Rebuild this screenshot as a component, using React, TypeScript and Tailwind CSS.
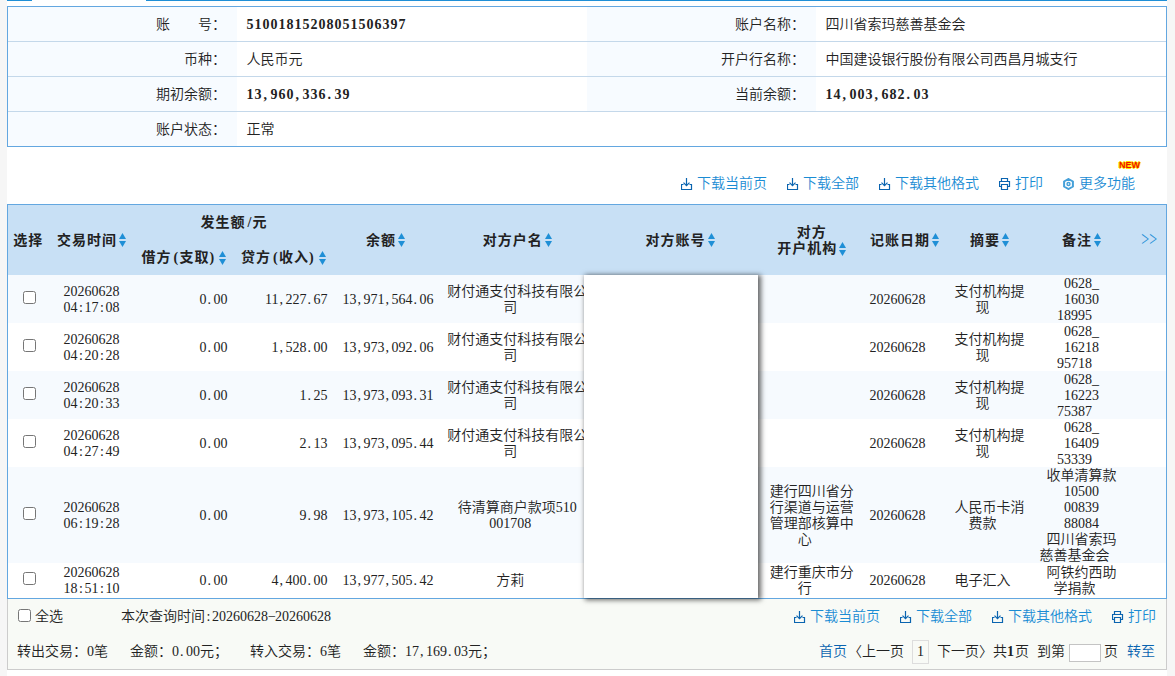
import type { ReactNode } from "react";
import clsx from "clsx";

type Transaction = {
  id: number;
  time: string[];
  debit: string;
  credit: string;
  balance: string;
  name: string[];
  branch: string[];
  date: string;
  summary: string[];
  remark: string[];
  height: string;
};

const transactions: Transaction[] = [
  {
    id: 1,
    time: ["20260628", "04:17:08"],
    debit: "0.00",
    credit: "11,227.67",
    balance: "13,971,564.06",
    name: ["财付通支付科技有限公", "司"],
    branch: [],
    date: "20260628",
    summary: ["支付机构提", "现"],
    remark: ["0628_", "16030", "18995"],
    height: "h-12 pt-0.5"
  },
  {
    id: 2,
    time: ["20260628", "04:20:28"],
    debit: "0.00",
    credit: "1,528.00",
    balance: "13,973,092.06",
    name: ["财付通支付科技有限公", "司"],
    branch: [],
    date: "20260628",
    summary: ["支付机构提", "现"],
    remark: ["0628_", "16218", "95718"],
    height: "h-12 pt-0.5"
  },
  {
    id: 3,
    time: ["20260628", "04:20:33"],
    debit: "0.00",
    credit: "1.25",
    balance: "13,973,093.31",
    name: ["财付通支付科技有限公", "司"],
    branch: [],
    date: "20260628",
    summary: ["支付机构提", "现"],
    remark: ["0628_", "16223", "75387"],
    height: "h-12 pt-0.5"
  },
  {
    id: 4,
    time: ["20260628", "04:27:49"],
    debit: "0.00",
    credit: "2.13",
    balance: "13,973,095.44",
    name: ["财付通支付科技有限公", "司"],
    branch: [],
    date: "20260628",
    summary: ["支付机构提", "现"],
    remark: ["0628_", "16409", "53339"],
    height: "h-12 pt-0.5"
  },
  {
    id: 5,
    time: ["20260628", "06:19:28"],
    debit: "0.00",
    credit: "9.98",
    balance: "13,973,105.42",
    name: ["待清算商户款项510", "001708"],
    branch: ["建行四川省分", "行渠道与运营", "管理部核算中", "心"],
    date: "20260628",
    summary: ["人民币卡消", "费款"],
    remark: ["收单清算款", "10500", "00839", "88084", "四川省索玛", "慈善基金会"],
    height: "h-24 pt-0.5"
  },
  {
    id: 6,
    time: ["20260628", "18:51:10"],
    debit: "0.00",
    credit: "4,400.00",
    balance: "13,977,505.42",
    name: ["方莉"],
    branch: ["建行重庆市分", "行"],
    date: "20260628",
    summary: ["电子汇入"],
    remark: ["阿铁约西助", "学捐款"],
    height: "h-[35px]"
  }
];

const columns =
  "grid grid-cols-[40.5px_86px_99px_100px_104px_159.5px_166px_97.5px_88px_82px_102px_33.5px] grid-rows-[minmax(0,1fr)]";

// Pads the narrow punctuation so every character takes one fixed cell
const Mono = ({ text, bold = false }: { text: string; bold?: boolean }) => (
  <span className={clsx("whitespace-pre", bold && "font-bold tracking-[1px]")}>
    {text.split(/([.,:])/).map((part, index) =>
      /^[.,:]$/.test(part) ? (
        <span
          className={clsx(part === ":" ? "pl-[1.5px]" : "pl-[1px]", bold && "tracking-[3.5px]", !bold && part === ":" && "tracking-[1.6px]", !bold && part !== ":" && "tracking-[2.5px]")}
          key={index}
        >
          {part}
        </span>
      ) : (
        part
      )
    )}
  </span>
);

const Lines = ({ lines }: { lines: string[] }) => (
  <div className="flex flex-col items-center justify-center">
    {lines.map((line, index) => (
      <span className={clsx("whitespace-nowrap", index === lines.length - 1 && "pr-[14px]")} key={index}>
        {line}
      </span>
    ))}
  </div>
);

const SortIcon = () => (
  <svg className="ml-[2px] shrink-0" width="7" height="14" viewBox="0 0 7 14" fill="#1f8fd6">
    <path d="M3.5 0 7 6H0z" />
    <path d="M0 8h7l-3.5 6z" />
  </svg>
);

const DownloadIcon = () => (
  <svg className="mr-[4px]" width="12" height="12" viewBox="0 0 12 12" fill="none" stroke="#0a64b0">
    <path d="M5.5 0v8M2.5 4.7l3 3 3-3" strokeWidth="1.2" />
    <path d="M2.5 6.5h-2v5h10v-5h-2" strokeWidth="1.2" />
  </svg>
);

const PrintIcon = () => (
  <svg className="mr-[4px]" width="12" height="12" viewBox="0 0 12 12" fill="none" stroke="#0a64b0" strokeWidth="1.2">
    <path d="M2.5 3.5v-3h6v3M2.5 8.5h-2v-5h10v5h-2" />
    <path d="M2.5 6.5h6v5h-6z" />
  </svg>
);

const GearIcon = () => (
  <svg className="mr-[4px]" width="12" height="12" viewBox="0 0 12 12" fill="none" stroke="#45a0d9">
    <path d="M5.5 1 9.9 3.5v5L5.5 11 1.1 8.5v-5z" strokeWidth="2" />
    <circle cx="5.5" cy="6" r="1.5" strokeWidth="1.4" />
  </svg>
);

const ActionLink = ({ icon, children }: { icon: ReactNode; children: ReactNode }) => (
  <a className="flex items-center text-[#1a8cd4]" href="#">
    {icon}
    {children}
  </a>
);

const DownloadLinks = () => (
  <>
    <ActionLink icon={<DownloadIcon />}>下载当前页</ActionLink>
    <ActionLink icon={<DownloadIcon />}>下载全部</ActionLink>
    <ActionLink icon={<DownloadIcon />}>下载其他格式</ActionLink>
    <ActionLink icon={<PrintIcon />}>打印</ActionLink>
  </>
);

const HeaderText = ({ text }: { text: string }) => (
  <span className="whitespace-nowrap">
    {text.split(/([()/])/).map((part, index) =>
      /^[()/]$/.test(part) ? (
        <span className={clsx("tracking-[1.3px]", part === ")" ? "pr-[2px]" : "pl-[2px]")} key={index}>
          {part}
        </span>
      ) : (
        part
      )
    )}
  </span>
);

const HeaderCell = ({ label, sub = false }: { label: string; sub?: boolean }) => (
  <div className="flex items-center justify-center">
    <span className={clsx(!sub && "pt-0.5")}>
      <HeaderText text={label} />
    </span>
    <SortIcon />
  </div>
);

const InfoLabel = ({ children }: { children: ReactNode }) => (
  <div className="flex items-center justify-end bg-[#f7fbff] pt-0.5 pr-[11px] whitespace-pre">{children}</div>
);

const InfoValue = ({ children }: { children: ReactNode }) => (
  <div className="flex items-center pt-0.5 pl-[9.5px]">{children}</div>
);

const InfoRow = ({ children }: { children: ReactNode }) => (
  <div className="grid h-[35px] grid-cols-[229px_350px_229px_350px] border-b border-[#c4d8ea] last:h-[34px] last:border-b-0">
    {children}
  </div>
);

export default function App() {
  return (
    <div className="h-[676px] w-[1175px] overflow-hidden bg-[#f6f6f6] pl-[7px] font-['Liberation_Serif','Noto_Sans_CJK_SC',serif] text-[14px] leading-4 font-[350] text-[#222]">
      <main className="h-full w-[1160px] bg-white">
        <div className="flex h-px justify-between">
          <div className="w-[25px] bg-[#1f8fd6]" />
          <div className="w-[1021px] bg-[#1f8fd6]" />
        </div>

        <section className="mt-[5px] h-[141px] border border-[#63a7e0]">
          <InfoRow>
            <InfoLabel>账　　号：</InfoLabel>
            <InfoValue>
              <Mono bold text="51001815208051506397" />
            </InfoValue>
            <InfoLabel>账户名称：</InfoLabel>
            <InfoValue>四川省索玛慈善基金会</InfoValue>
          </InfoRow>
          <InfoRow>
            <InfoLabel>币种：</InfoLabel>
            <InfoValue>人民币元</InfoValue>
            <InfoLabel>开户行名称：</InfoLabel>
            <InfoValue>中国建设银行股份有限公司西昌月城支行</InfoValue>
          </InfoRow>
          <InfoRow>
            <InfoLabel>期初余额：</InfoLabel>
            <InfoValue>
              <Mono bold text="13,960,336.39" />
            </InfoValue>
            <InfoLabel>当前余额：</InfoLabel>
            <InfoValue>
              <Mono bold text="14,003,682.03" />
            </InfoValue>
          </InfoRow>
          <InfoRow>
            <InfoLabel>账户状态：</InfoLabel>
            <InfoValue>正常</InfoValue>
          </InfoRow>
        </section>

        <div className="flex h-[57px] items-end justify-end gap-5 pr-[32px] pb-[12px]">
          <DownloadLinks />
          <div className="relative">
            <ActionLink icon={<GearIcon />}>更多功能</ActionLink>
            <span className="absolute -top-[16px] -right-[5px] font-['Liberation_Sans',sans-serif] text-[9px] leading-[10px] font-bold text-[#f01000] [text-shadow:1px_0_#ffe000,-1px_0_#ffe000,0_1px_#ffe000,0_-1px_#ffe000]">
              NEW
            </span>
          </div>
        </div>

        <section className="relative border border-[#63a7e0]">
          <div className={clsx(columns, "h-[70px] bg-[#c8e0f5] font-bold tracking-[1px]")}>
            <div className="flex items-center justify-center pt-0.5">选择</div>
            <HeaderCell label="交易时间" />
            <div className="col-span-2 grid grid-cols-[99px_100px] grid-rows-2">
              <div className="col-span-2 flex items-center justify-center">
                <HeaderText text="发生额/元" />
              </div>
              <HeaderCell label="借方(支取)" sub />
              <HeaderCell label="贷方(收入)" sub />
            </div>
            <HeaderCell label="余额" />
            <HeaderCell label="对方户名" />
            <HeaderCell label="对方账号" />
            <div className="flex flex-col items-center justify-center pt-0.5">
              <span>对方</span>
              <HeaderCell label="开户机构" sub />
            </div>
            <HeaderCell label="记账日期" />
            <HeaderCell label="摘要" />
            <HeaderCell label="备注" />
            <div className="flex items-center justify-center font-light tracking-normal text-[#1f8fd6]">
              <span className="scale-y-150">&gt;&gt;</span>
            </div>
          </div>

          {transactions.map((item) => (
            <div className={clsx(columns, item.height, "odd:bg-white even:bg-[#f6fafe]")} key={item.id}>
              <div className="flex items-center justify-center pb-[5px] pl-[2px]">
                <input className="size-[13px]" type="checkbox" />
              </div>
              <div className="flex flex-col items-center justify-center">
                {item.time.map((part) => (
                  <Mono key={part} text={part} />
                ))}
              </div>
              <div className="flex items-center justify-end pr-[6px]">
                <Mono text={item.debit} />
              </div>
              <div className="flex items-center justify-end pr-[6px]">
                <Mono text={item.credit} />
              </div>
              <div className="flex items-center justify-end pr-[4px]">
                <Mono text={item.balance} />
              </div>
              <Lines lines={item.name} />
              <div />
              <Lines lines={item.branch} />
              <Lines lines={[item.date]} />
              <Lines lines={item.summary} />
              <Lines lines={item.remark} />
              <div />
            </div>
          ))}

          <div className="absolute top-[70px] left-[576px] h-[323px] w-[174px] bg-white shadow-[2px_1px_5px_1px_rgba(0,0,0,0.6)]" />
        </section>

        <footer className="h-[71px] border border-t-0 border-[#ccc] bg-[#f8faf6]">
          <div className="flex h-[35px] items-center justify-between pr-[10px] pl-[10px]">
            <div className="flex items-center">
              <input className="mr-[4px] mb-[2px] size-[13px]" type="checkbox" />
              全选
              <span className="ml-[58px]">
                本次查询时间
                <Mono text=":20260628" />
                <span className="tracking-[-0.9px]">−</span>
                <Mono text="20260628" />
              </span>
            </div>
            <div className="flex gap-5">
              <DownloadLinks />
            </div>
          </div>
          <div className="flex h-[35px] items-center justify-between pr-[11px] pl-[9px]">
            <div className="flex gap-[22px]">
              <span>转出交易：0笔</span>
              <span>
                金额：
                <Mono text="0.00" />
                元；
              </span>
              <span>转入交易：6笔</span>
              <span>
                金额：
                <Mono text="17,169.03" />
                元；
              </span>
            </div>
            <div className="flex items-center">
              <a className="text-[#0a64b0]" href="#">
                首页
              </a>
              <span className="ml-[1px]">〈上一页</span>
              <span className="mx-2 flex h-[24px] w-[17px] items-center justify-center border border-[#ddd]">1</span>
              <span>下一页〉</span>
              <span>
                共<b className="font-bold tracking-[1px]">1</b>页
              </span>
              <span className="ml-2">到第</span>
              <input className="mr-[3px] ml-[4px] mt-[3px] h-[18px] w-[32px] border border-[#c4c4c4] bg-white" type="text" />
              <span>页</span>
              <a className="ml-[9px] text-[#0a64b0]" href="#">
                转至
              </a>
            </div>
          </div>
        </footer>
      </main>
    </div>
  );
}
